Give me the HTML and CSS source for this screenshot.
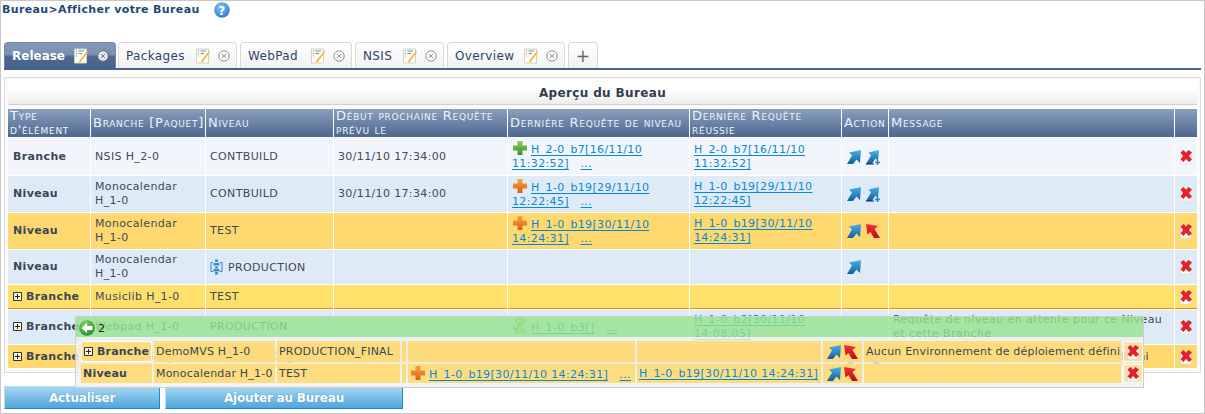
FILE: index.html
```html
<!DOCTYPE html>
<html lang="fr">
<head>
<meta charset="utf-8">
<title>Bureau</title>
<link rel="stylesheet" href="styles.css">
</head>
<body>
<svg class="defs" width="0" height="0" aria-hidden="true">
  <defs>
    <linearGradient id="gb" x1="0" y1="0" x2="0" y2="1"><stop offset="0" stop-color="#4bb0ea"/><stop offset="1" stop-color="#10609f"/></linearGradient>
    <linearGradient id="gr" x1="0" y1="0" x2="0" y2="1"><stop offset="0" stop-color="#f8303a"/><stop offset="1" stop-color="#b80d18"/></linearGradient>
    <linearGradient id="gg" x1="0" y1="0" x2="0" y2="1"><stop offset="0" stop-color="#8ad25a"/><stop offset="1" stop-color="#3d8f28"/></linearGradient>
    <linearGradient id="go" x1="0" y1="0" x2="0" y2="1"><stop offset="0" stop-color="#fba23c"/><stop offset="1" stop-color="#d9621a"/></linearGradient>
    <symbol id="up" viewBox="0 0 16 16"><path d="M15 1 L14 14 L10.500 10.500 L7 15 L1 15 L6 6.500 L3 3.500 Z" fill="url(#gb)"/></symbol>
    <symbol id="upadd" viewBox="0 0 16 16"><path d="M14 1 L13 12 L10.500 9.500 L7 15 L1 15 L6 6.500 L3.500 3.500 Z" fill="url(#gb)"/><path d="M1 15H9" stroke="#1a2a3a" stroke-width="1"/><path d="M12.500 11V16M10 13.500H15" stroke="#2a86c8" stroke-width="1.600"/></symbol>
    <symbol id="rb" viewBox="0 0 16 16"><path d="M1 1 L13 3 L9.500 6 L15 15 L9 15 L5.500 9 L2.500 11.500 Z" fill="url(#gr)"/></symbol>
    <symbol id="plus" viewBox="0 0 16 16"><path d="M5.500 1H10.500V5.500H15V10.500H10.500V15H5.500V10.500H1V5.500H5.500Z"/></symbol>
    <symbol id="del" viewBox="0 0 14 16"><path d="M1.500 3H12V15H1.500Z" fill="#fff" stroke="#d5dde6" stroke-width=".7"/><path d="M1.500 3.500 L4.500 1 L7 3.800 L9.500 1 L13 3.500 L10 7 L13 10.500 L10 13 L7 10 L4.500 13 L1.500 10.500 L4 7 Z" fill="#e5222c"/></symbol>
    <symbol id="note" viewBox="0 0 16 16"><path d="M1.500 1H13.500V15H1.500Z" fill="#fdfdf6" stroke="#d2d2c6"/><path d="M3 3H4M3 5.500H4M3 8H4M5.500 3H11M5.500 5.500H9" stroke="#7a88a0"/><path d="M14 3 L15 4 L8 13.500 L6 15 L6.500 12.500Z" fill="#f3b72c"/></symbol>
    <symbol id="x" viewBox="0 0 11 11"><circle cx="5.500" cy="5.500" r="4.800"/><path d="M3.700 3.700L7.300 7.300M7.300 3.700L3.700 7.300" fill="none"/></symbol>
    <symbol id="exp" viewBox="0 0 9 9"><path d="M.5 .5H8.500V8.500H.5Z" fill="#fdf6d8" stroke="#333"/><path d="M2 4.500H7M4.500 2V7" stroke="#222"/></symbol>
    <symbol id="prod" viewBox="0 0 13 16"><path d="M3 3.500H1V12.500H3M10 3.500H12V12.500H10" fill="none" stroke="#2a86d0"/><path d="M5 .5H8V3H5ZM3.500 4H9.500V6.500H3.500ZM5 7.500H8V9.500H5ZM3.500 10H9.500V12.500H3.500ZM5 13H8V15.500H5Z" fill="#3a90d0"/></symbol>
    <symbol id="hour" viewBox="0 0 16 16"><path d="M3 1H13V3L9 8 L13 13V15H3V13L7 8 L3 3Z" fill="#b9d49b" stroke="#7fae6a"/><path d="M1 9 L4 12 L9 4" fill="none" stroke="#6fb06a" stroke-width="2"/></symbol>
  </defs>
</svg>

<div class="page">
  <div class="crumb">
    <span class="crumb-text">Bureau&gt;Afficher votre Bureau</span>
    <svg class="help" viewBox="0 0 16 16"><defs><radialGradient id="gh" cx=".4" cy=".3" r=".8"><stop offset="0" stop-color="#7fc0f4"/><stop offset="1" stop-color="#2a78c8"/></radialGradient></defs><circle cx="8" cy="8" r="7.800" fill="url(#gh)"/><text x="8" y="12.500" text-anchor="middle" class="help-q">?</text></svg>
  </div>

  <nav class="tabs">
    <div class="tab active tw1"><span>Release</span><svg class="ti"><use href="#note"/></svg><svg class="tx"><use href="#x"/></svg></div>
    <div class="tab tw2"><span>Packages</span><svg class="ti"><use href="#note"/></svg><svg class="tx"><use href="#x"/></svg></div>
    <div class="tab tw3"><span>WebPad</span><svg class="ti"><use href="#note"/></svg><svg class="tx"><use href="#x"/></svg></div>
    <div class="tab tw4"><span>NSIS</span><svg class="ti"><use href="#note"/></svg><svg class="tx"><use href="#x"/></svg></div>
    <div class="tab tw5"><span>Overview</span><svg class="ti"><use href="#note"/></svg><svg class="tx"><use href="#x"/></svg></div>
    <div class="tab add">+</div>
  </nav>

  <section class="panel">
    <h2 class="panel-title">Aperçu du Bureau</h2>
    <table class="grid">
      <colgroup><col class="c1"><col class="c2"><col class="c3"><col class="c4"><col class="c5"><col class="c6"><col class="c7"><col class="c8"><col class="c9"></colgroup>
      <thead>
        <tr class="rh"><th>Type d'élément</th><th class="nw">Branche [Paquet]</th><th>Niveau</th><th>Début prochaine Requête prévu le</th><th>Dernière Requête de niveau</th><th>Dernière Requête réussie</th><th>Action</th><th>Message</th><th></th></tr>
      </thead>
      <tbody>
        <tr class="r1 light">
          <td class="b">Branche</td><td>NSIS H_2-0</td><td>CONTBUILD</td><td>30/11/10 17:34:00</td>
          <td><svg class="st green"><use href="#plus"/></svg><a href="#">H_2-0_b7[16/11/10 11:32:52]</a>&nbsp;&nbsp; <a href="#">...</a></td>
          <td><a href="#">H_2-0_b7[16/11/10 11:32:52]</a></td>
          <td class="act"><svg class="ar"><use href="#up"/></svg><svg class="ar"><use href="#upadd"/></svg></td><td></td>
          <td class="dc"><svg class="dl"><use href="#del"/></svg></td>
        </tr>
        <tr class="r2 blue">
          <td class="b">Niveau</td><td>Monocalendar H_1-0</td><td>CONTBUILD</td><td>30/11/10 17:34:00</td>
          <td><svg class="st orange"><use href="#plus"/></svg><a href="#">H_1-0_b19[29/11/10 12:22:45]</a>&nbsp;&nbsp; <a href="#">...</a></td>
          <td><a href="#">H_1-0_b19[29/11/10 12:22:45]</a></td>
          <td class="act"><svg class="ar"><use href="#up"/></svg><svg class="ar"><use href="#upadd"/></svg></td><td></td>
          <td class="dc"><svg class="dl"><use href="#del"/></svg></td>
        </tr>
        <tr class="r3 amber">
          <td class="b">Niveau</td><td>Monocalendar H_1-0</td><td>TEST</td><td></td>
          <td><svg class="st orange"><use href="#plus"/></svg><a href="#">H_1-0_b19[30/11/10 14:24:31]</a>&nbsp;&nbsp; <a href="#">...</a></td>
          <td><a href="#">H_1-0_b19[30/11/10 14:24:31]</a></td>
          <td class="act"><svg class="ar"><use href="#up"/></svg><svg class="ar"><use href="#rb"/></svg></td><td></td>
          <td class="dc"><svg class="dl"><use href="#del"/></svg></td>
        </tr>
        <tr class="r4 blue">
          <td class="b">Niveau</td><td>Monocalendar H_1-0</td><td><svg class="pr"><use href="#prod"/></svg>PRODUCTION</td><td></td><td></td><td></td>
          <td class="act"><svg class="ar"><use href="#up"/></svg></td><td></td>
          <td class="dc"><svg class="dl"><use href="#del"/></svg></td>
        </tr>
        <tr class="r5 yellow">
          <td class="b"><svg class="ex"><use href="#exp"/></svg>Branche</td><td>Musiclib H_1-0</td><td>TEST</td><td></td><td></td><td></td><td></td><td></td>
          <td class="dc"><svg class="dl"><use href="#del"/></svg></td>
        </tr>
        <tr class="r6 blue">
          <td class="b"><svg class="ex"><use href="#exp"/></svg>Branche</td><td>Webpad H_1-0</td><td>PRODUCTION</td><td></td>
          <td><svg class="st"><use href="#hour"/></svg><a href="#">H_1-0_b3[]</a>&nbsp;&nbsp; <a href="#">...</a></td>
          <td><a href="#">H_1-0_b2[30/11/10 14:08:05]</a></td><td></td>
          <td class="msg-wide">Requête de niveau en attente pour ce Niveau et cette Branche</td>
          <td class="dc"><svg class="dl"><use href="#del"/></svg></td>
        </tr>
        <tr class="r7 amber">
          <td class="b"><svg class="ex"><use href="#exp"/></svg>Branche</td><td>DemoMVS H_1-0</td><td>PRODUCTION_FINAL</td><td></td><td></td><td></td>
          <td class="act"><svg class="ar"><use href="#up"/></svg><svg class="ar"><use href="#rb"/></svg></td>
          <td class="msg-tight">Aucun Environnement de déploiement défini</td>
          <td class="dc"><svg class="dl"><use href="#del"/></svg></td>
        </tr>
      </tbody>
    </table>
  </section>

  <div class="buttons">
    <button class="btn bw1">Actualiser</button>
    <button class="btn bw2">Ajouter au Bureau</button>
  </div>

  <aside class="popup">
    <div class="popup-head">
      <svg class="back" viewBox="0 0 16 16"><defs><radialGradient id="gbk" cx=".4" cy=".25" r=".85"><stop offset="0" stop-color="#7fd060"/><stop offset="1" stop-color="#1c8a2a"/></radialGradient></defs><circle cx="8" cy="8" r="7.800" fill="url(#gbk)"/><path d="M2.500 8 L8 3V6H13.500V10H8V13Z" fill="#fff"/></svg>
      <span>2</span>
    </div>
    <div class="popup-body">
      <table class="sub">
        <colgroup><col class="s1"><col class="s2"><col class="s3"><col class="s4"><col class="s5"><col class="s6"><col class="s7"><col class="s8"><col class="s9"></colgroup>
        <tbody>
          <tr class="sr1">
            <td class="b first"><svg class="ex"><use href="#exp"/></svg>Branche</td><td>DemoMVS H_1-0</td><td>PRODUCTION_FINAL</td><td></td><td></td><td></td>
            <td class="act"><svg class="ar"><use href="#up"/></svg><svg class="ar"><use href="#rb"/></svg></td>
            <td>Aucun Environnement de déploiement défini</td>
            <td class="dc wb"><svg class="dl"><use href="#del"/></svg></td>
          </tr>
          <tr class="sr2">
            <td class="b">Niveau</td><td>Monocalendar H_1-0</td><td>TEST</td><td></td>
            <td><svg class="st orange"><use href="#plus"/></svg><a href="#">H_1-0_b19[30/11/10 14:24:31]</a>&nbsp;&nbsp; <a href="#">...</a></td>
            <td><a href="#">H_1-0_b19[30/11/10 14:24:31]</a></td>
            <td class="act"><svg class="ar"><use href="#up"/></svg><svg class="ar"><use href="#rb"/></svg></td><td></td>
            <td class="dc wb"><svg class="dl"><use href="#del"/></svg></td>
          </tr>
        </tbody>
      </table>
    </div>
  </aside>
</div>
</body>
</html>
```

FILE: styles.css
```css
* { box-sizing: border-box; }
html, body { margin: 0; padding: 0; }
body { font-family: "DejaVu Sans", Verdana, sans-serif; font-size: 11px; letter-spacing: .36px; color: #3f4a5a; background: #fff; overflow: hidden; }
.defs { display: block; height: 0; }

.page { position: relative; width: 1205px; height: 414px; border: 1px solid #c8c8c8; padding: 0 3px; overflow: hidden; }

.crumb { height: 41px; display: flex; align-items: flex-start; margin-left: -2px; padding-top: 1px; }
.crumb-text { font-weight: bold; font-size: 11px; line-height: 15px; color: #1c4a78; }
.help { width: 16px; height: 16px; margin-left: 14px; margin-top: 0; }
.help-q { font: bold 12px "DejaVu Sans", sans-serif; fill: #fff; }

.tabs { display: flex; gap: 3px; height: 28px; border-bottom: 2px solid #47628c; align-items: flex-end; }
.tab { height: 26px; display: flex; align-items: center; padding-left: 7px; border: 1px solid #d8d8d8; border-bottom: 0; border-radius: 4px 4px 0 0; background: linear-gradient(#ffffff, #f1f1f1); font-size: 12px; color: #2e4468; }
.tab span { flex: 1; }
.tab.active { padding-left: 7px; border-color: #6f86a8; background: linear-gradient(#8398b8 0, #7b90b2 45%, #4d6790 55%, #47628c 100%); color: #fff; font-weight: bold; letter-spacing: 0; }
.tw1 { width: 112px; margin-right: -1px; }
.tw2 { width: 119px; }
.tw3 { width: 112px; }
.tw4 { width: 89px; }
.tw5 { width: 118px; }
.add { width: 30px; padding: 0; justify-content: center; font-size: 17px; color: #666; }
.ti { width: 16px; height: 16px; margin-right: 7px; }
.tx { width: 12px; height: 12px; margin-right: 6px; fill: none; stroke: #888; stroke-width: .8; }
.active .ti { margin-right: 8px; }
.active .tx { fill: #e8e8e8; stroke: #5a6a80; margin-right: 6px; }

.panel { margin-top: 7px; height: 296px; border: 1px solid #dcdcdc; padding: 2px 3px 0; background: #fafafa; }
.panel-title { margin: 0; height: 25px; font-size: 12px; font-weight: bold; line-height: 27px; text-align: center; color: #333d4d; background: linear-gradient(#ffffff 40%, #ececec); border-bottom: 1px solid #cfcfcf; }

.grid, .sub { border-collapse: separate; table-layout: fixed; }
.grid { width: 1191px; border-spacing: 1px; margin: 3px 0 0 -1px; background: #fff; }
.c1 { width: 82px; } .c2 { width: 114px; } .c3 { width: 127px; } .c4 { width: 173px; }
.c5 { width: 181px; } .c6 { width: 151px; } .c7 { width: 46px; } .c8 { width: 285px; } .c9 { width: 22px; }

.grid th { padding: 0 2px; font-weight: normal; font-variant: small-caps; font-size: 13px; letter-spacing: .72px; line-height: 14px; text-align: left; color: #eef2f8; background: linear-gradient(#8b9fbd, #4d6790); overflow: hidden; }
.grid th.nw { white-space: nowrap; padding-right: 0; }
.grid td { padding: 0 4px; line-height: 14px; vertical-align: middle; }
.grid td.b { padding-left: 5px; }
.rh { height: 27px; }
.r1 { height: 37px; } .r2, .r3 { height: 36px; } .r4 { height: 34px; } .r5 { height: 24px; } .r6 { height: 34px; } .r7 { height: 23px; }
.light td { background: #f2f6fc; }
.blue td { background: #deebf7; }
.amber td { background: #ffd96f; }
.yellow td { background: #ffe06b; border-bottom: 1px solid #e88c10; }
.b { font-weight: bold; color: #3a4656; }
.grid .msg-wide { letter-spacing: .42px; padding-right: 0; }
.grid .msg-tight { letter-spacing: .24px; }
a { color: #0a88d6; text-decoration: underline; text-decoration-skip-ink: none; text-underline-offset: 2px; }
.st { width: 16px; height: 16px; vertical-align: -3px; margin-right: 3px; margin-top: -2px; }
.green { fill: url(#gg); }
.orange { fill: url(#go); }
.act { white-space: nowrap; }
.ar { width: 16px; height: 16px; vertical-align: middle; margin-right: 3px; }
.dc { text-align: center; }
.grid .dc, .sub .dc { padding: 0; }
.dl { width: 14px; height: 16px; vertical-align: middle; }
.pr { width: 13px; height: 16px; vertical-align: -4px; margin-right: 5px; }
.ex { width: 9px; height: 9px; margin-right: 4px; vertical-align: -1px; }

.buttons { display: flex; gap: 5px; margin-top: 13px; }
.btn { height: 23px; padding: 0; border: 1px solid #b4e0f6; border-right: 1px solid #1f8ad0; border-bottom: 1px solid #1f8ad0; background: linear-gradient(#a6d6f0, #4fa6de); color: #fff; font: bold 12px "DejaVu Sans", sans-serif; letter-spacing: -.2px; text-shadow: 0 0 1px #3a7fb0; }
.bw1 { width: 156px; }
.bw2 { width: 238px; }

.popup { position: absolute; left: 74px; top: 315px; width: 1069px; height: 72px; border: 1px solid #cfcfcf; }
.popup-head { height: 20px; display: flex; align-items: center; gap: 3px; background: rgba(150, 228, 140, .8); color: #222; font-size: 11px; padding-top: 2px; }
.popup-body { height: 50px; background: rgba(240, 240, 240, .82); padding: 2px 0 0 3px; }
.back { width: 16px; height: 16px; margin-left: 3px; }
.sub { width: 1064px; border-spacing: 2px; }
.s1 { width: 71px; } .s2 { width: 121px; } .s3 { width: 123px; } .s4 { width: 4px; } .s5 { width: 227px; } .s6 { width: 184px; } .s7 { width: 39px; } .s8 { width: 257px; } .s9 { width: 20px; }
.sub td { padding: 0 2px; background: rgba(255, 217, 111, .88); white-space: nowrap; overflow: hidden; color: #3a4656; letter-spacing: .2px; }
.sub a { letter-spacing: .36px; }
.sr1 { height: 21px; }
.sr2 { height: 19px; }
.sub .first { box-shadow: inset 0 0 0 1px #fff; padding-left: 3px; }
.sub .wb { box-shadow: inset 0 0 0 1px #fff; background: rgba(255, 217, 111, .6); }
.sub .act { padding-left: 3px; }
.sub .ar { margin-right: 1px; }
```
